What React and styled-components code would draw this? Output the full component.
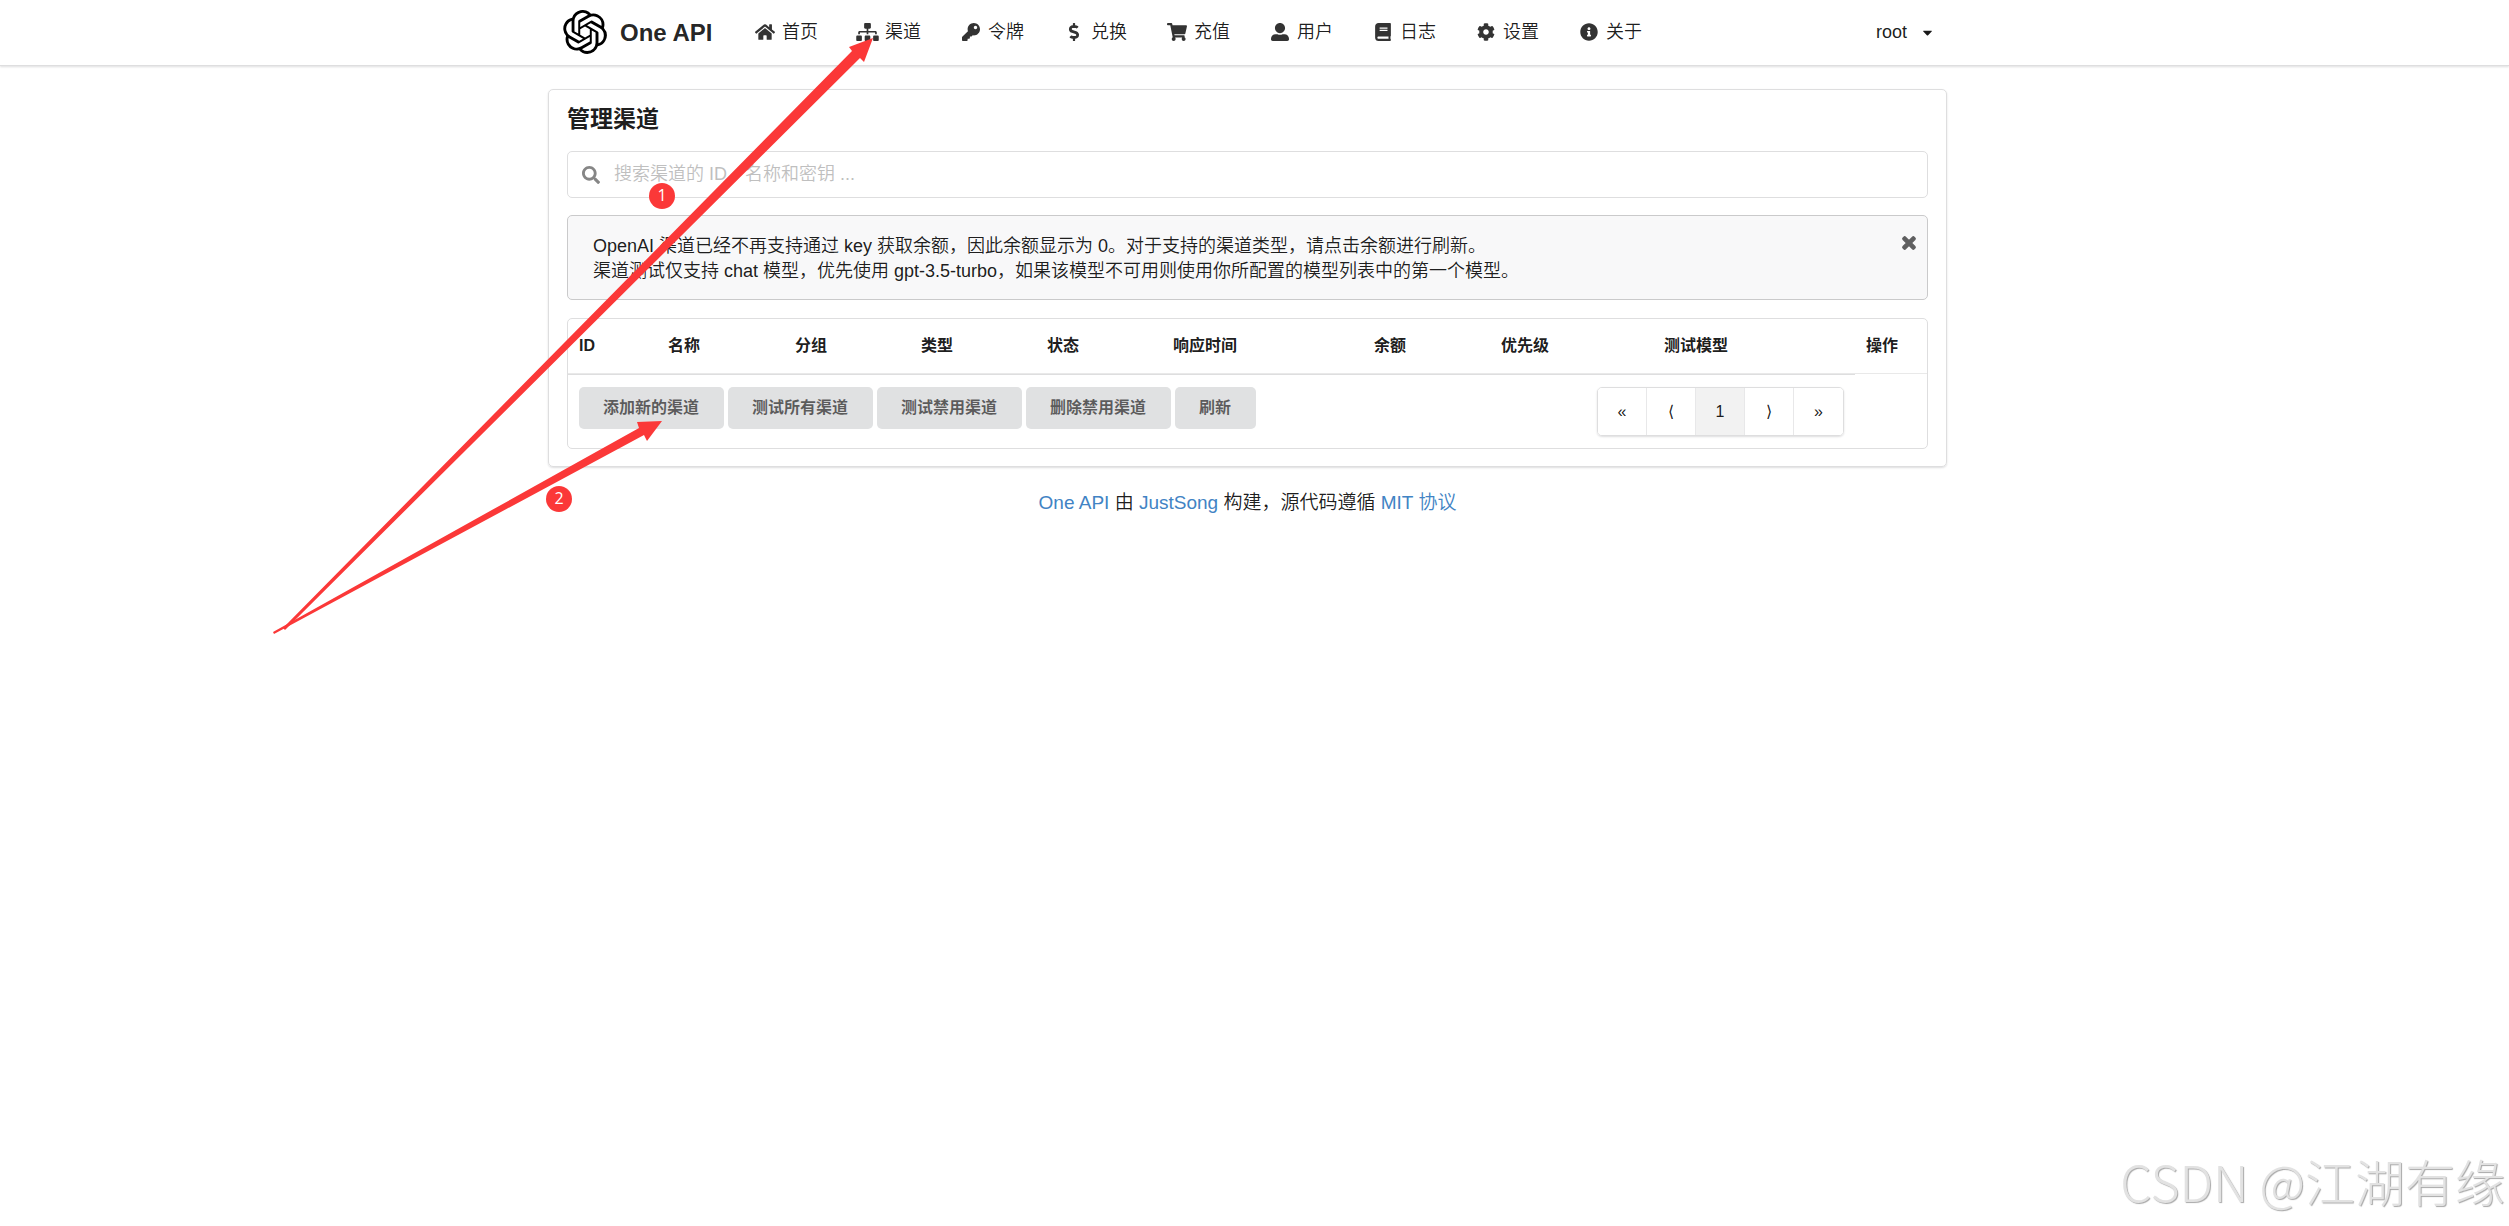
import styled, { createGlobalStyle } from "styled-components";
import {
  FaBook,
  FaCaretDown,
  FaCog,
  FaDollarSign,
  FaHome,
  FaInfoCircle,
  FaKey,
  FaSearch,
  FaShoppingCart,
  FaSitemap,
  FaTimes,
  FaUserAlt,
} from "react-icons/fa";
import { SiOpenai } from "react-icons/si";

const links = [
  { name: "首页", icon: FaHome, width: 20 },
  { name: "渠道", icon: FaSitemap, width: 23 },
  { name: "令牌", icon: FaKey, width: 18 },
  { name: "兑换", icon: FaDollarSign, width: 18 },
  { name: "充值", icon: FaShoppingCart, width: 20 },
  { name: "用户", icon: FaUserAlt, width: 18 },
  { name: "日志", icon: FaBook, width: 18 },
  { name: "设置", icon: FaCog, width: 18 },
  { name: "关于", icon: FaInfoCircle, width: 18 },
];

// widths are shares of the whole table
const columns = [
  { name: "ID", width: 89 },
  { name: "名称", width: 127 },
  { name: "分组", width: 126 },
  { name: "类型", width: 126 },
  { name: "状态", width: 126 },
  { name: "响应时间", width: 201 },
  { name: "余额", width: 127 },
  { name: "优先级", width: 163 },
  { name: "测试模型", width: 202 },
  { name: "操作", width: 72 },
];
const total = columns.reduce((sum, c) => sum + c.width, 0);

const actions = [
  "添加新的渠道",
  "测试所有渠道",
  "测试禁用渠道",
  "删除禁用渠道",
  "刷新",
];

const pages = ["«", "⟨", "1", "⟩", "»"];

const Header = () => (
  <NavBar>
    <NavInner>
      <Brand href="#">
        <SiOpenai size={44} />
        One API
      </Brand>
      <NavLinks>
        {links.map(({ name, icon: Icon, width }) => (
          <NavLink href="#" key={name}>
            <IconBox $width={width}>
              <Icon />
            </IconBox>
            {name}
          </NavLink>
        ))}
      </NavLinks>
      <UserMenu type="button">
        root
        <FaCaretDown size={15} />
      </UserMenu>
    </NavInner>
  </NavBar>
);

const ChannelsTable = () => (
  <TableFrame>
    <Table>
      <colgroup>
        {columns.map((c) => (
          <col key={c.name} style={{ width: `${(c.width / total) * 100}%` }} />
        ))}
      </colgroup>
      <thead>
        <tr>
          {columns.map((c) => (
            <HeadCell key={c.name}>{c.name}</HeadCell>
          ))}
        </tr>
      </thead>
      <tfoot>
        <tr>
          <FootCell colSpan={9}>
            <FootRow>
              <Actions>
                {actions.map((a) => (
                  <ActionButton type="button" key={a}>
                    {a}
                  </ActionButton>
                ))}
              </Actions>
              <Pagination aria-label="Pagination">
                {pages.map((p) => (
                  <PageButton type="button" key={p} $active={p === "1"}>
                    {p}
                  </PageButton>
                ))}
              </Pagination>
            </FootRow>
          </FootCell>
        </tr>
      </tfoot>
    </Table>
  </TableFrame>
);

const Guide = () => (
  <>
    <Arrows width="900" height="640" viewBox="0 0 900 640" aria-hidden="true">
      <path d="M283 628L852 51L849 47L873 38L864 62L860 58L285 630Z" />
      <path d="M273 632L639 428L637 422L662 421L647 441L644 435L274 634Z" />
    </Arrows>
    <Badge $x={649} $y={183}>
      1
    </Badge>
    <Badge $x={546} $y={486}>
      2
    </Badge>
  </>
);

const App = () => {
  return (
    <Page>
      <GlobalStyle />
      <Header />
      <Main>
        <Card>
          <Title>管理渠道</Title>
          <Search>
            <FaSearch size={18} />
            <SearchInput
              type="text"
              aria-label="搜索渠道"
              placeholder="搜索渠道的 ID，名称和密钥 ..."
            />
          </Search>
          <Message>
            <p>
              OpenAI 渠道已经不再支持通过 key 获取余额，因此余额显示为
              0。对于支持的渠道类型，请点击余额进行刷新。
              <br />
              渠道测试仅支持 chat 模型，优先使用
              gpt-3.5-turbo，如果该模型不可用则使用你所配置的模型列表中的第一个模型。
            </p>
            <CloseButton type="button" aria-label="关闭">
              <FaTimes size={18} />
            </CloseButton>
          </Message>
          <ChannelsTable />
        </Card>
      </Main>
      <Footer>
        <a href="#">One API</a> 由 <a href="#">JustSong</a> 构建，源代码遵循{" "}
        <a href="#">MIT 协议</a>
      </Footer>
      <Guide />
      <Watermark>CSDN @江湖有缘</Watermark>
    </Page>
  );
};

const GlobalStyle = createGlobalStyle`
  * {
    box-sizing: border-box;
  }
  body {
    margin: 0;
    background: #fff;
    color: rgba(0, 0, 0, 0.9);
    font-family: "Liberation Sans", "Noto Sans CJK SC", sans-serif;
    font-size: 18px;
    font-weight: 350;
    line-height: 25px;
  }
  a {
    text-decoration: none;
  }
  button, input {
    font: inherit;
    color: inherit;
  }
`;

const Page = styled.div`
  position: relative;
  min-height: 100vh;
`;
const NavBar = styled.header`
  padding-right: 14px;
  border-bottom: 1px solid #dededf;
  box-shadow: 0 1px 2px rgba(34, 36, 38, 0.15);
`;
const NavInner = styled.div`
  display: flex;
  align-items: center;
  max-width: 1399px;
  height: 65px;
  margin: 0 auto;
  padding: 0 12px 1px 15px;
`;
const Brand = styled.a`
  display: flex;
  align-items: center;
  gap: 13px;
  width: 172px;
  color: rgba(0, 0, 0, 0.87);
  font-size: 24px;
  font-weight: 700;
  svg {
    color: #000;
  }
`;
const NavLinks = styled.nav`
  display: flex;
  flex: 1;
`;
const NavLink = styled.a`
  display: flex;
  align-items: center;
  gap: 7px;
  padding: 0 20px 0 19px;
  color: rgba(0, 0, 0, 0.9);
`;
const IconBox = styled.span`
  display: flex;
  justify-content: center;
  width: 21px;
  color: #333;
  svg {
    flex-shrink: 0;
    width: ${(props) => props.$width}px;
    height: 18px;
  }
`;
const UserMenu = styled.button`
  display: flex;
  align-items: center;
  gap: 13px;
  padding: 0;
  border: 0;
  background: none;
`;
const Main = styled.main`
  padding: 23px 14px 0 0;
`;
const Card = styled.section`
  max-width: 1399px;
  margin: 0 auto;
  padding: 17px 18px 17px;
  border: 1px solid #dededf;
  border-radius: 5px;
  box-shadow: 0 1px 2px rgba(34, 36, 38, 0.15);
`;
const Title = styled.h3`
  margin: 0 0 19px;
  font-size: 23px;
  font-weight: 700;
  line-height: 25px;
`;
const Search = styled.label`
  display: flex;
  align-items: center;
  gap: 14px;
  height: 47px;
  margin-bottom: 17px;
  padding: 0 14px;
  border: 1px solid #dededf;
  border-radius: 5px;
  svg {
    color: #868686;
  }
`;
const SearchInput = styled.input`
  flex: 1;
  padding: 0;
  border: 0;
  outline: 0;
  background: none;
  &::placeholder {
    color: #bfbfbf;
    opacity: 1;
  }
`;
const Message = styled.div`
  display: flex;
  align-items: flex-start;
  justify-content: space-between;
  margin-bottom: 18px;
  padding: 18px 9px 15px 25px;
  border: 1px solid #cacacb;
  border-radius: 5px;
  background: #f8f8f9;
  p {
    margin: 0;
  }
`;
const CloseButton = styled.button`
  display: flex;
  padding: 0;
  border: 0;
  background: none;
  color: #5f5f60;
  svg {
    stroke: currentColor;
    stroke-width: 40px;
  }
`;
const TableFrame = styled.div`
  border: 1px solid #dededf;
  border-radius: 5px;
`;
const Table = styled.table`
  width: 100%;
  table-layout: fixed;
  border-collapse: separate;
  border-spacing: 0;
  font-size: 16px;
`;
const HeadCell = styled.th`
  height: 55px;
  padding: 0 11px;
  border-bottom: 1px solid #e9e9e9;
  font-weight: 700;
  line-height: 24px;
  text-align: left;
`;
const FootCell = styled.td`
  padding: 12px 11px;
  border-top: 1px solid #dededf;
`;
const FootRow = styled.div`
  display: flex;
  align-items: flex-start;
  justify-content: space-between;
`;
const Actions = styled.div`
  display: flex;
  gap: 4px;
`;
const ActionButton = styled.button`
  height: 42px;
  padding: 0 25px 0 24px;
  border: 0;
  border-radius: 5px;
  background: #e0e1e2;
  color: rgba(0, 0, 0, 0.6);
  font-weight: 700;
  line-height: 16px;
`;
const Pagination = styled.nav`
  display: flex;
  border: 1px solid #dededf;
  border-radius: 5px;
  box-shadow: 0 1px 2px rgba(34, 36, 38, 0.15);
  overflow: hidden;
`;
const PageButton = styled.button`
  width: 49px;
  height: 47px;
  padding: 0;
  border: 0;
  border-right: 1px solid #e8e8e9;
  background: ${(props) => (props.$active ? "#f2f2f2" : "#fff")};
  &:last-child {
    border-right: 0;
  }
`;
const Footer = styled.footer`
  padding: 22px 14px 22px 0;
  font-size: 19px;
  line-height: 27px;
  text-align: center;
  a {
    color: #4183c4;
  }
`;
const Arrows = styled.svg`
  position: absolute;
  top: 0;
  left: 0;
  fill: #fb3838;
  pointer-events: none;
`;
const Badge = styled.span`
  position: absolute;
  top: ${(props) => props.$y}px;
  left: ${(props) => props.$x}px;
  width: 26px;
  height: 26px;
  border-radius: 50%;
  background: #fb3838;
  color: #fff;
  font-family: "Open Sans", sans-serif;
  font-size: 16px;
  font-weight: 400;
  line-height: 24px;
  text-align: center;
`;
const Watermark = styled.div`
  position: absolute;
  right: 4px;
  bottom: 16px;
  color: #e2e2e2;
  font-family: "Noto Sans CJK SC", sans-serif;
  font-size: 50px;
  font-weight: 300;
  line-height: 60px;
  text-shadow: 1px 1px 1px #a8a8a8;
`;

export default App;
